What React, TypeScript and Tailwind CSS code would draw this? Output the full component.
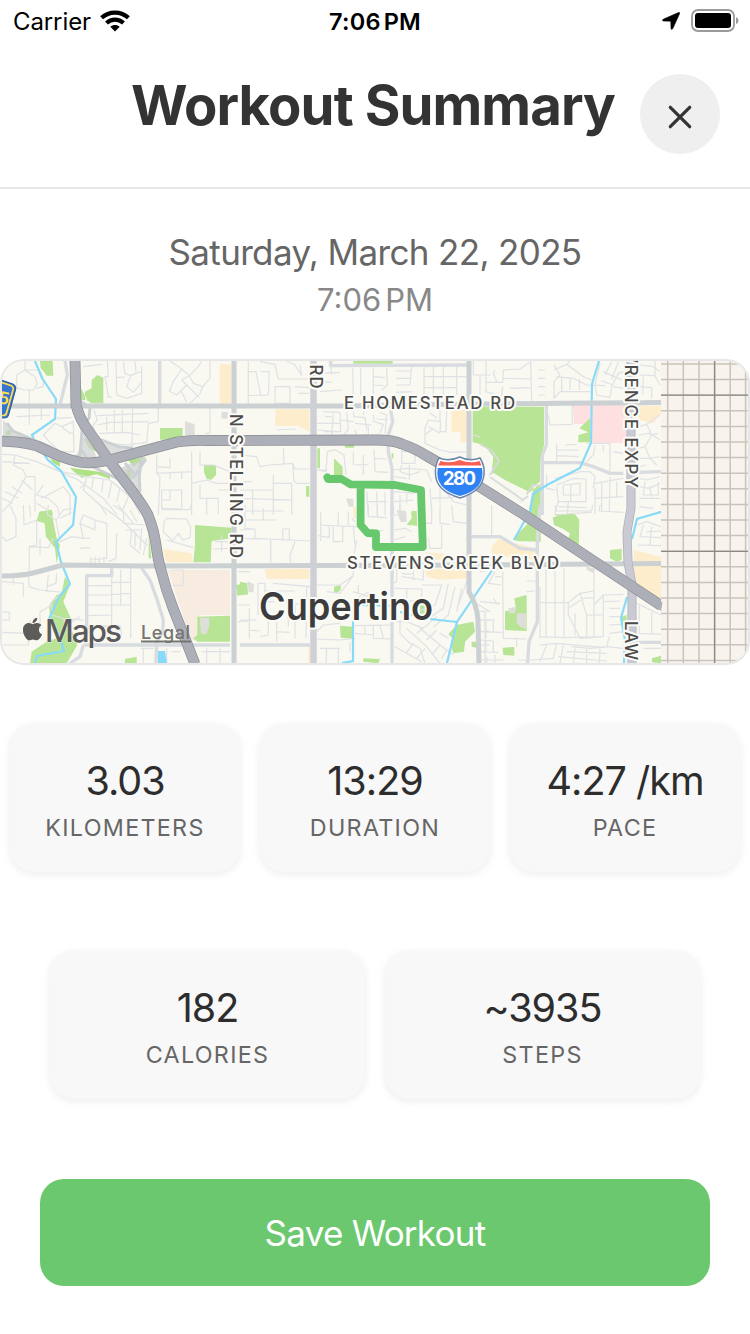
import React from "react";
import { FaApple } from "react-icons/fa";

type Tile = { x: number; y: number; minor: string; mid?: string; green?: string; lime?: string; sand?: string; gray?: string };

const TILES: Tile[] = [
  {
    x: 0,
    y: 355,
    green:
      "M120 18L158 18L160 62L140 62L130 48L122 40ZM255 110L275 100L275 75L292 60L310 68L310 145L275 145L255 132ZM243 100L243 135L262 135ZM480 219L548 219L548 254L480 254ZM612 330L648 330L648 360L634 374L620 372L612 352ZM120 470L155 465L158 480L118 480Z",
    lime: "M250 250L270 255L290 290L268 280ZM385 315L440 305L400 335ZM150 312L180 318L180 335L160 325ZM210 338L330 355L330 372L290 358L245 368L222 350ZM15 230L30 222L35 238L18 242ZM375 340L395 350L395 375L380 360Z",
    sand: "M659 28L694 28L694 146L659 146Z",
    gray: "M555 198L584 208L584 246L555 240ZM665 170L684 172L682 192L664 190Z",
    mid: "M195 18L202 60L192 100L180 150M479 18L479 150",
    minor:
      "M75 18L75 45L50 60L50 98L70 105L100 105L112 85L105 65L75 45L118 45L130 70L130 95L108 100M88 105L88 150M250 35L308 28M322 18L325 65L315 65L325 125L335 128M348 18L350 120M350 68L375 66M370 20L375 55L392 62L422 50M392 62L380 95L400 112L425 82L425 35M405 18L408 52M425 82L425 115L380 130L350 120M510 18L545 42L568 62L545 75L560 90L530 120L508 108L520 80L545 42M568 62L595 35L605 18M568 62L580 85L608 95L630 70L630 18M608 95L600 115L570 145M560 90L598 128M545 110L560 142M282 165L292 195L280 210L282 230L300 250L335 265L380 270L440 262L445 205L475 200L475 155M292 182L445 175M292 210L330 202L445 200M320 185L320 228M343 165L343 230M367 165L367 235M398 155L396 275M298 235L380 232L420 240M630 160L630 235L615 235M88 155L88 210M124 155L124 195M50 185L150 180M165 205L185 215L220 200L222 290L180 290L150 262L130 240L165 205M185 215L210 235L222 235M170 190L215 188M7 298L45 300L110 320L180 350L235 375L310 430L350 478M7 320L90 325M45 300L40 330L70 345L78 365L35 440L7 470M78 365L105 365L105 470M35 395L65 415M15 410L55 430M7 430L38 445M65 375L98 405M130 390L110 420L145 430L172 455L178 480M110 445L160 475M125 430L190 395L210 420L210 480M185 350L260 365L330 375L395 430L420 478M260 365L250 405L300 450M280 370L275 400M310 372L305 412M335 382L325 430M360 398L350 440M385 425L370 462M300 450L320 480M240 400L260 380M470 300L470 355L480 365L475 480M470 335L510 338M510 310L510 340M470 355L575 350M510 372L510 350M545 372L545 350M575 290L575 480M575 385L620 375L650 385L690 385M600 290L600 330L640 330L690 350M485 405L485 460L545 462L545 405ZM485 435L510 435L510 405M600 390L600 430L655 430L655 478M620 430L620 480M655 405L690 405",
  },
  {
    x: 0,
    y: 505,
    green:
      "M118 20L155 14L160 50L170 100L180 120L170 175L165 130L138 95L134 55L110 48ZM195 215L210 240L190 290L215 345L200 355L215 375L232 420L200 475L90 475L95 440L140 410L170 400L150 345L148 300L170 270L185 265ZM585 60L695 68L695 100L635 108L632 172L580 172L585 120ZM708 240L740 235L742 268L712 272ZM592 335L690 332L690 410L592 410L580 400L592 390ZM375 462L410 455L410 475L375 475ZM446 80L454 160L446 160Z",
    sand: "M488 132L575 145L578 172L498 172Z",
    gray: "M600 338L628 338L628 365L618 388L602 385Z",
    mid: "M260 390L260 212L335 212L335 190M250 420L690 420M250 420L240 455L210 475M425 190L450 225L470 280L490 345L488 380L470 410L468 475",
    minor:
      "M30 0L48 40L48 95L20 108L7 95M70 0L72 60L110 45M88 0L92 35M110 45L110 120L88 125L88 205M88 125L145 128L160 100M120 100L120 150M145 0L142 28L168 45L180 110L215 95L250 100L240 55L250 30M168 45L190 15L215 10M180 40L215 22M250 30L285 45L320 55L320 160L270 165M285 45L285 75L240 55M250 100L270 100M240 130L270 128M350 85L348 160L325 170M300 0L350 35L380 60L440 120M340 0L370 20L372 55L440 60M355 0L400 55M390 15L410 50M375 75L420 75M395 75L390 120L420 145M405 80L405 125M425 70L420 135M440 100L430 150M272 155L272 178M285 155L285 178M298 155L298 178M312 155L312 178M485 0L487 14L570 14L572 0M500 40L560 42L572 65L570 98L548 105L535 85L518 108L490 80L492 50ZM500 105L580 128M645 110L690 110M638 132L690 130M665 90L665 140M7 230L70 235L70 275M40 220L40 240M85 210L88 245L120 255L190 262M145 210L140 262M170 205L168 235L140 245M190 262L155 290L155 330L190 340L250 345M190 340L200 370L220 385M155 300L120 320L120 370L90 375M7 320L28 322L28 345L7 345M7 382L85 385L85 420L7 420M90 345L90 400M240 335L215 350M265 242L335 242M265 270L335 270M265 300L390 300M265 332L335 330M265 365L360 362L365 390M335 215L335 390M362 195L362 300M392 190L392 400M335 232L392 232M335 268L392 265M430 430L430 475M422 430L460 430M500 430L500 475M515 440L540 440M620 430L620 475M660 430L660 475M605 440L690 440M515 195L550 195L550 240L518 242M715 200L750 200M715 300L750 300M715 350L750 348",
  },
  {
    x: 240,
    y: 355,
    green: "M340 18L458 18L458 26L340 26ZM282 310L308 335L308 360L282 360ZM198 393L208 393L208 425L198 425ZM514 470L526 468L526 480L514 480ZM232 280L240 280L240 340L232 340ZM315 270L342 270L342 278L315 278ZM455 295L460 295L460 310L455 310ZM698 155L752 155L752 282L725 268L698 262Z",
    sand: "M106 163L208 163L208 232L175 213L106 213ZM634 165L680 165L680 262L662 262L662 232L634 232Z",
    gray: "M318 430L340 432L340 455L326 455Z",
    mid: "M272 18L272 32L688 30M452 165L458 200L445 240L445 290L456 340L456 480",
    minor:
      "M25 18L25 148M25 50L48 50L62 120L25 122M62 50L88 50L85 120L62 122M60 20L105 28L115 72L208 72M140 18L165 30L185 62M180 30L185 62M105 95L150 95L150 145L105 145ZM165 95L208 98M175 115L208 115M240 55L300 52M272 35L275 60M240 110L305 105M240 80L275 82M338 40L340 120M362 40L362 120M400 35L400 120M440 40L442 90L425 105M400 65L435 68M400 90L430 92M468 70L515 70M468 48L515 48M468 90L510 90L515 35M515 110L468 112M552 35L552 120M580 35L580 120M610 35L610 120M650 35L650 120M552 65L680 65M552 98L650 98M700 18L700 60L750 60M720 60L720 120M250 170L300 172L302 230L250 230M230 205L302 205M280 175L275 240M255 185L275 185M300 195L340 200M320 172L325 225L310 240M340 170L342 185L375 188L380 225M345 205L395 210M400 180L402 200L430 208L420 235M372 165L370 180M420 172L440 180L435 235M345 225L350 245M385 215L385 245M445 195L410 192M235 225L285 230M110 225L168 222M600 165L600 200L565 195L555 220L555 265L600 285M620 170L618 230L600 230L602 200M600 285L635 292L680 290M565 215L600 235M570 175L590 188M555 240L580 220M0 300L50 305L60 335L88 330L158 325L165 342L208 342M158 325L162 378L170 385L208 385M130 280L132 328M100 360L100 480M38 405L38 480M0 405L100 405M0 430L155 435L155 480M100 385L155 385L155 435M0 380L35 380M262 290L285 284L312 300L318 360M262 290L258 350L232 345M232 345L262 345M340 290L340 330M370 300L370 360M402 285L405 350M345 330L385 328M405 310L440 312M405 350L445 352M485 285L485 325L525 325L525 290L485 290M460 345L500 340L560 345L575 380M485 330L480 350L510 360L540 350M508 330L508 375M460 365L500 370M530 280L540 310L580 330M600 355L610 400L640 440L680 450M570 400L575 475M575 430L640 428M600 400L600 445M462 410L525 415M462 440L520 435M480 420L480 470M500 415L500 445M380 410L385 480M410 410L412 480M380 440L440 440M435 410L435 480M710 330L735 360M700 240L735 250L750 268",
  },
  {
    x: 240,
    y: 505,
    green: "M530 18L532 62L500 60L515 40L515 18ZM0 230L22 235L24 268L0 270ZM282 245L302 240L302 255L290 264L282 260ZM300 362L338 365L338 402L302 398ZM650 360L700 350L705 380L675 410L672 440L640 445L632 420L640 402L625 388ZM370 460L420 462L415 475L370 470ZM540 290L558 290L558 328L540 330ZM695 410L708 410L708 428L695 425Z",
    sand: "M75 192L208 192L208 222L80 222ZM558 143L612 145L612 165L565 165ZM552 192L682 192L682 220L600 224L560 215ZM205 420L214 420L214 475L205 475ZM340 5L348 5L348 40L340 40Z",
    gray: "M470 15L498 18L500 50L482 52ZM22 228L42 238L40 262L26 262Z",
    mid: "M456 0L456 475M0 420L210 420M690 95L750 95",
    minor:
      "M15 0L15 70L45 72M15 18L130 18M15 45L110 45M0 75L45 72L45 100L210 108M128 105L128 72L148 72L148 105M165 110L150 150L152 175M92 105L92 175M0 100L60 102M70 10L70 45M240 60L350 65M242 22L242 108M268 60L268 100M295 22L295 60M280 65L280 110L308 110L308 65M325 20L325 60M235 92L270 98M335 40L345 50M350 105L342 150M340 65L345 120M385 0L385 35L440 38M412 0L412 38M430 75L410 80M462 30L500 28M462 75L495 70L515 80M462 105L495 95M480 0L478 40M575 0L575 55L550 55M600 0L600 55L630 58M565 100L570 130L605 130M605 60L605 130M635 0L640 50L680 55M230 240L300 240L340 212M340 190L340 212L300 265M300 265L260 260M54 235L54 330M54 235L75 235L75 290L105 290M75 258L165 258M100 235L210 245M120 260L122 290L200 300M200 245L198 400M165 300L165 330L200 330M28 310L28 400M0 345L50 345M28 375L60 378M85 330L85 390L60 395M110 350L110 410M145 310L145 365M165 345L165 400M110 380L150 382M340 285L385 262L388 290M340 260L385 275M355 240L355 265M470 190L470 230L455 235M485 215L550 225L550 190M520 190L520 225M485 205L515 208M465 250L545 252L545 290M545 240L605 240L585 300L530 320M465 280L500 290L530 285M500 250L500 280M625 235L610 310L560 345M645 245L625 330L580 365M665 250L650 320M680 230L655 300M590 335L550 370L500 350L465 350M230 380L250 360L300 355M230 402L300 405L345 400M345 362L456 360M345 385L400 390M400 362L400 400L456 402M375 365L375 390M240 430L300 430M260 430L258 475M295 430L295 475M330 410L330 440M420 362L430 400M480 345L480 385L510 415L540 430L555 475M500 370L560 425L600 475M540 370L600 420L640 450M560 405L590 375M530 385L555 365M600 420L575 450M465 425L545 470M520 415L498 445M555 430L530 460M620 435L605 460M600 385L625 400M700 290L750 320M715 320L750 318M735 320L735 475M720 345L750 345M720 380L750 378M720 420L750 420",
  },
  {
    x: 480,
    y: 355,
    green: "M0 155L192 155L192 270L182 310L180 380L160 395L152 480L182 480L182 385L150 412L35 355L40 305L20 280L0 270ZM298 220L330 190L330 262L295 262L295 240L325 232ZM225 477L275 477L275 480L225 480Z",
    sand: "M475 153L543 153L543 175L520 205L475 195Z",
    mid: "M199 150L199 270L187 300L187 480M190 323L300 323L340 335L390 355L430 355M475 352L543 350",
    minor:
      "M18 18L18 110L45 118M18 82L68 82L70 45L120 42L150 22M45 45L40 55L50 80M70 70L150 72M68 95L65 122L35 120M90 100L150 98M152 18L155 138M175 45L195 45M175 70L195 70M175 95L195 95M175 120L195 120M222 30L240 60L222 80L222 130L240 110L330 110M222 45L260 28L310 65L335 75M260 28L270 18M230 65L280 70L320 90L375 92M245 65L245 110M270 68L270 105M298 72L298 105M360 25L345 90L350 120L390 128L395 95L415 55L430 50M370 50L425 75M365 78L400 90M395 20L375 60M415 20L395 75M430 100L400 95M478 30L520 35L540 50M478 60L525 62M525 18L525 62L540 90M478 95L515 98L515 130M490 65L488 120M205 180L210 210L277 208M277 150L277 208M230 268L230 320M230 285L295 285M230 302L295 305M255 270L290 268M320 265L390 265L390 350M345 270L340 300L320 320M370 270L370 290M400 290L430 295M475 215L500 208L540 180M475 240L510 235L540 255M500 208L515 240L495 275L478 280M515 240L535 235M495 275L510 310L540 305M478 310L510 310L530 330M478 335L500 330M200 360L200 400L225 405M225 370L300 350L330 350L345 365L340 400M230 390L280 370L318 372L318 440L235 440L230 395M250 390L300 385L300 420L250 420ZM272 390L272 440M235 440L225 475M345 385L430 370M365 380L365 470M390 365L388 470M345 430L430 425M410 380L410 425M345 400L345 478M235 455L320 458M265 440L262 478M478 370L500 375L540 365M478 395L505 400L540 385M495 380L490 420L535 420L535 380M478 430L540 430M510 400L515 425M478 455L520 460",
  },
  {
    x: 480,
    y: 505,
    green: "M218 38L240 28L285 28L298 45L296 130L262 110L270 85L245 70L222 60ZM390 135L425 132L425 165L410 170L390 160ZM103 280L140 270L140 378L75 375L75 318L108 315ZM68 428L103 426L103 452L70 450ZM150 0L182 0L182 110L110 108L100 100L140 60ZM516 460L543 452L543 475L516 472ZM425 335L440 330L440 360L428 355Z",
    sand: "M50 105L65 100L90 112L168 130L168 165L100 160L35 145L35 128ZM462 135L520 150L543 155L543 290L468 240L460 190Z",
    gray: "M112 325L138 325L138 372L120 365L110 350ZM85 310L108 305L105 325L88 325ZM320 185L345 190L342 205L320 195Z",
    mid: "M180 0L172 100L172 350L147 410L143 475M0 95L60 95L120 130L172 135M470 412L543 412",
    minor:
      "M225 0L228 18L335 18L338 0M228 30L280 25L335 22M35 0L35 90M360 0L358 18L430 22M0 200L65 190M45 200L25 235L65 240M45 215L65 215M68 200L70 400M0 290L60 295M40 280L55 300M140 228L165 228M140 260L165 258M180 245L180 400M198 190L198 400M225 190L225 395M252 190L252 395M180 293L265 293L300 265L342 258M265 310L310 280L342 278M265 293L265 330L300 400L370 395M300 265L320 330L320 395M342 190L342 395M320 330L370 330M285 325L285 390M342 300L370 270L430 268M370 270L370 395M372 290L420 288M388 310L420 310M388 335L425 335M388 360L425 358M388 385L430 380M388 395L380 425L430 430M180 395L255 398L370 395M180 420L230 415L375 428M200 420L180 470M230 415L220 460L150 465M250 420L240 475M275 425L330 430L385 425M260 440L380 445M285 430L280 475M320 430L320 475M360 430L358 475M235 455L380 468M472 60L500 50L543 65M490 60L480 95L543 98M500 80L543 78M472 120L543 122M515 65L510 120M470 295L543 330M478 300L478 385M478 385L543 388M515 320L515 388M490 430L543 430M0 345L45 345M18 345L18 400M40 345L40 380M0 380L65 382M0 405L40 408M18 405L18 440M40 408L40 440M0 440L55 442M0 465L70 465M20 455L20 475M45 450L45 475M70 400L140 402M110 402L110 425M115 465L140 465",
  },
];

const FREEWAYS = [
  "M0 441L17 442Q28 443 37 446L57 455Q72 461 82 462.5T110 460L143 451L177 442Q190 440 207 440.5L377 440Q393 440 402 444Q416 449 427 456L480 487L523 514L580 552L661 605.5",
  "M75 361L76 405Q80 420 88 430L110 462L133 492Q144 507 148 515Q154 530 156 545Q158 560 161 570Q166 590 173 608L195 664",
];

const halo = {
  stroke: "#fbfbf7",
  strokeWidth: 4,
  strokeLinejoin: "round" as const,
  paintOrder: "stroke" as const,
  fill: "#4b4b4b",
};

function RouteMap() {
  const vertical = [667.7, 683.3, 699, 714.6, 730.2, 745.6];
  const horizontal = Array.from({ length: 20 }, (_, i) => 364 + i * 15.6);
  return (
    <svg viewBox="2 361 746 302" className="block h-full w-full" fontFamily="Inter, 'Liberation Sans', sans-serif">
      <rect x="0" y="359" width="750" height="306" fill="#f9f8f1" />
      <path d="M573 405h53v38h-35v-19h-17z" fill="#fde0df" />
      <path d="M168 570h62v45h-30v24l-9 2z" fill="#f7ecdf" />
      {TILES.map((t) => (
        <g key={`${t.x}-${t.y}`} transform={`translate(${t.x} ${t.y}) scale(.33333)`} fill="none">
          {t.green && <path d={t.green} fill="#b7e495" />}
          {t.lime && <path d={t.lime} fill="#aee284" />}
          {t.sand && <path d={t.sand} fill="#feedcd" />}
          {t.gray && <path d={t.gray} fill="#dededb" />}
          <path d={t.minor} stroke="#dfe1e5" strokeWidth="3.6" strokeLinejoin="round" />
          <path d={t.mid} stroke="#d8dce0" strokeWidth="10" strokeLinejoin="round" />
        </g>
      ))}
      <path d="M480 444L492 451L499 461L490 475L489 480L522 501L533 485L540 486" fill="none" stroke="#d8dad8" strokeWidth="2" />
      <path d="M488 476L494 473L529 496L523 502L487 482zM480 446L492 455L487 463L480 458z" fill="#f8f8f0" />
      <path d="M490 477L523 500L528 496" fill="none" stroke="#dcdcde" strokeWidth="2" />
      <g fill="none" stroke="#88dbf8" strokeWidth="2.2">
        <path d="M35 361L42 378L56 399L55 419L32 435L35 442L48 460L61 471L76 497L73 525L56 542L61 562L70 584L59 597L49 619L58 633L64 651L37 656L35 663" />
        <path d="M599 361L592 384L591 443L580 468L547 485L533 494L530 511L514 540M493 569L457 622L447 663M457 622L430 619M360 605L395 606M400 612L412 615M353 621L353 661L342 663" />
        <path d="M661 512L637 519L632 539M627 597L621 618L625 640L624 663M650 515L661 512" />
      </g>
      <path d="M158 651h7l2 12h-9z" fill="#88dbf8" />
      <path d="M80 410L82 455L98 462zM100 440L122 449L142 451L112 458zM120 468L144 458L138 492zM3 420L14 430L40 442L3 440zM76 457L95 459L80 447z" fill="#d0d2d4" opacity=".7" />
      <g fill="none" stroke="#cbd0d3" strokeWidth="5">
        <path d="M7 423L13 431L48 446L37 448M79 400L90 408L89 418L82 430L80 455L72 457M96 438L120 447L133 448M112 458L143 451L139 470L140 492M78 460L110 475L128 484M90 463L80 448M125 463L135 475M133 478L146 459" strokeWidth="2.8" />
        <path d="M0 406H340Q450 404 661 402.5M0 576Q22 576 33 573T63 565L140 566L480 565L661 563.5" />
        <path d="M234 361V664M469 361L469 592Q477 605 478 620L479 664" />
        <path d="M313.5 361V664" strokeWidth="6.5" stroke="#ced0d6" />
      </g>
      <path d="M631 361V508L627 532L628 562L632 585V664" fill="none" stroke="#afb1bd" strokeWidth="9" />
      <path d="M631 361V508L627 532L628 562L632 585V664" fill="none" stroke="#c9cad3" strokeWidth="7.4" />
      <g fill="none" strokeLinejoin="round">
        {FREEWAYS.map((d) => (
          <path key={d} d={d} stroke="#8c8e95" strokeWidth="10.8" />
        ))}
        {FREEWAYS.map((d) => (
          <path key={d} d={d} stroke="#adafb8" strokeWidth="9.4" />
        ))}
      </g>

      <rect x="661" y="359" width="90" height="306" fill="#f8f3ec" />
      <g stroke="#c7c4bd" strokeWidth="1.5">
        {vertical.map((x) => (
          <path key={x} d={`M${x} 361V663`} />
        ))}
        {horizontal.map((y) => (
          <path key={y} d={`M661 ${y}H748`} />
        ))}
      </g>
      <path d="M714.6 361V663M661 395.2H748M661 551.3H748" stroke="#8b8986" strokeWidth="1.3" />
      <path d="M655 601L662.5 602L661 611L650 604z" fill="#adafb8" />

      <g {...halo} fontSize="16.8" fontWeight="450">
        <text x="344" y="408.5" textLength="171">E HOMESTEAD RD</text>
        <text x="347" y="568.5" textLength="212">STEVENS CREEK BLVD</text>
        <text transform="translate(229.500 414) rotate(90)" textLength="144">N STELLING RD</text>
        <text transform="translate(309.500 364.500) rotate(90)" textLength="24">RD</text>
        <text transform="translate(625 346) rotate(90)" textLength="142">WRENCE EXPY</text>
        <text transform="translate(625 621) rotate(90)" textLength="39">LAW</text>
      </g>
      <text x="259" y="619.500" textLength="174" lengthAdjust="spacingAndGlyphs" {...halo} fill="#3c3c3c" fontSize="38" fontWeight="600">
        Cupertino
      </text>

      <path
        d="M327.3 477.3L328 479H341.6L350.6 484.3L395 485L421 490L422.8 547H376V533.5L367.6 533L360.6 525V486"
        fill="none"
        stroke="#67c76c"
        strokeWidth="7.8"
        strokeLinecap="round"
        strokeLinejoin="round"
      />

      <path d="M439 458Q449 462 459.700 457Q470 462 480 458Q485 466 484 474Q483 491 460 498Q436 491 435.500 474Q435 465 439 458z" fill="#fff" stroke="#6c86ab" strokeWidth="1.5" />
      <path d="M440.500 461Q450 464 459.700 460Q470 464 479.500 461L481.500 465.500H438z" fill="#f85f55" />
      <path d="M437.800 468H482Q486 489 460 496Q434 489 437.800 468z" fill="#2f82f5" />
      <text x="443" y="485" textLength="33" fontSize="18.500" fontWeight="700" fill="#fff">280</text>

      <path d="M0 379L14 384Q17 386 16 390L9 415Q8 418 5 418H0z" fill="#3674cf" />
      <path d="M0 382L11 385.500Q14 387 13 390L6.500 413Q6 415.500 3 415.500H0" fill="none" stroke="#ffe045" strokeWidth="1.7" />
      <path d="M0 380L13 384Q16 386 15.500 389L8.500 415Q8 418 5 418H0" fill="none" stroke="#36558b" strokeWidth=".8" />
      <text transform="translate(-2.500 403) rotate(12)" fontSize="17" fontWeight="600" fill="#ffe045">5</text>

      <FaApple size={26} x="19.500" y="616" color="#5c5c5a" />
      <text x="45" y="642" textLength="77" fill="#5c5c5a" stroke="#fbfbf7" strokeOpacity=".5" strokeWidth="1.500" paintOrder="stroke" fontSize="31.500" fontWeight="500">Maps</text>
      <text x="141" y="639" textLength="49" fill="#747471" fontSize="18" fontWeight="500">Legal</text>
      <path d="M141 641.500H191" stroke="#747471" strokeWidth="2" />
    </svg>
  );
}

function StatusBar() {
  return (
    <div className="grid h-10 grid-cols-3 items-center text-black">
      <div className="flex items-center gap-[9px] pl-[13px]">
        <span className="pt-[2px] text-[24px] leading-[40px] tracking-[-0.1px]">Carrier</span>
        <svg viewBox="0 0 30 22" className="h-[22px] w-[30px]" fill="none" stroke="#000">
          <path d="M1.600 7.800C9 .800 21 .800 28.400 7.800" strokeWidth="4.200" />
          <path d="M6.500 13C11.500 8.500 18.500 8.500 23.500 13" strokeWidth="4.200" />
          <path d="M10.300 16.800C13 14.500 17 14.500 19.700 16.800L15 21.500z" fill="#000" stroke="none" />
        </svg>
      </div>
      <span className="pt-[2px] text-center text-[23.500px] leading-[40px] font-semibold tracking-[0.2px]">7:06<span className="ml-[3px]">PM</span></span>
      <div className="flex items-center justify-end gap-[11px] pr-[11px]">
        <svg viewBox="0 0 18 18" className="h-[18px] w-[18px]">
          <path d="M16.500.500Q18.300 0 17.500 1.800L10.800 16.600Q9.500 18.300 9 16.400L8.800 9.200L1.500 9Q-.400 8.600 1.200 7.300z" fill="#000" stroke="#000" strokeWidth=".6" />
        </svg>
        <svg viewBox="0 0 48 24" className="h-6 w-12">
          <rect x="1" y="1" width="42" height="21" rx="6" fill="none" stroke="#9b9b9b" strokeWidth="1.800" />
          <rect x="4" y="4" width="36" height="15" rx="3" fill="#000" />
          <path d="M45 8Q47.500 9 47.500 11.500T45 15z" fill="#9b9b9b" />
        </svg>
      </div>
    </div>
  );
}

function Stat({ value, label }: { value: string; label: string }) {
  return (
    <div className="flex h-[148px] flex-1 flex-col items-center rounded-[24px] bg-[#f8f8f8] pt-[32px] shadow-[0_2px_8px_rgba(0,0,0,0.08)]">
      <span className="text-[39.5px] leading-[50px] tracking-[-1px] text-[#2d2d2d]">{value}</span>
      <span className="mt-[7px] text-[23.300px] leading-[30px] tracking-[1.300px] text-[#666]">{label}</span>
    </div>
  );
}

export default function App() {
  return (
    <main className="flex h-[1334px] w-[750px] flex-col overflow-hidden bg-white font-[Inter,'Liberation_Sans',sans-serif]">
      <StatusBar />
      <header className="flex h-[149px] justify-end border-b-2 border-[#e8e8e8] pt-[34px] pr-[30px]">
        <h1 className="mr-[25px] pt-[1px] text-[54.500px] leading-[60px] font-bold tracking-[-0.900px] whitespace-nowrap text-[#333]">Workout Summary</h1>
        <button aria-label="Close" className="flex h-20 w-20 items-center justify-center rounded-full bg-[#efefef] pt-[6px]">
          <svg viewBox="0 0 24 24" className="h-6 w-6" stroke="#333" strokeWidth="3.2" strokeLinecap="round">
            <path d="M2.300 2.300L21.700 21.700M21.700 2.300L2.300 21.700" />
          </svg>
        </button>
      </header>
      <div className="flex h-[170px] flex-col items-center pt-[40px]">
        <p className="text-[35px] leading-[46px] tracking-[-0.65px] text-[#666]">Saturday, March 22, 2025</p>
        <p className="mt-[4px] text-[31px] leading-[42px] text-[#888]">7:06<span className="ml-[4px]">PM</span></p>
      </div>
      <section className="h-[306px] overflow-hidden rounded-[24px] border-2 border-[#e7e7e7]">
        <RouteMap />
      </section>
      <section className="mt-[59px] flex gap-5 px-[10px]">
        <Stat value="3.03" label="KILOMETERS" />
        <Stat value="13:29" label="DURATION" />
        <Stat value="4:27 /km" label="PACE" />
      </section>
      <section className="mt-[79px] flex gap-5 px-[50px]">
        <Stat value="182" label="CALORIES" />
        <Stat value="~3935" label="STEPS" />
      </section>
      <button className="mx-10 mt-[80px] h-[107px] rounded-[24px] bg-[#6bc86e] pt-[2px] text-[35px] tracking-[-0.75px] text-white">Save Workout</button>
    </main>
  );
}
